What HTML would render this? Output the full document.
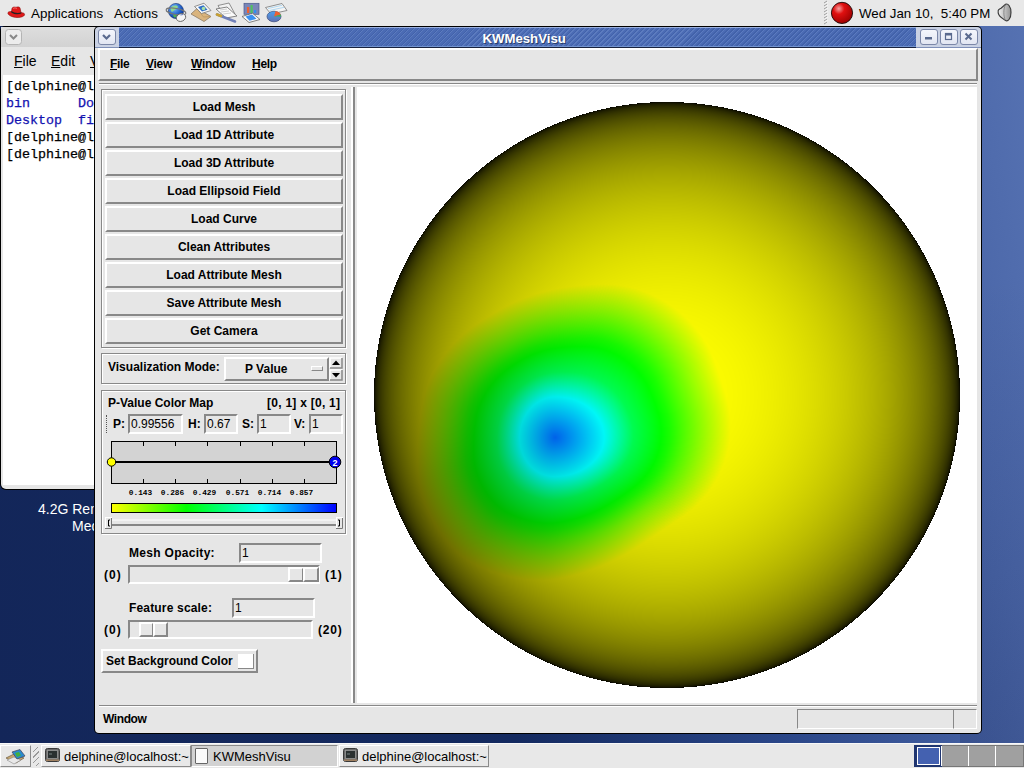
<!DOCTYPE html>
<html><head><meta charset="utf-8">
<style>
*{box-sizing:border-box}
html,body{margin:0;padding:0}
body{width:1024px;height:768px;overflow:hidden;position:relative;font-family:"Liberation Sans",sans-serif;
 background:linear-gradient(80deg,#132659 0%,#142a60 45%,#2a4688 68%,#4a66a8 90%,#5672b2 100%)}
.a{position:absolute}
.t{position:absolute;white-space:nowrap}
.tk{font-family:"Liberation Sans",sans-serif;font-weight:bold;font-size:12px;color:#000}
.rz{border-style:solid;border-width:2px;border-color:#fff #888 #888 #fff}
.sk{border-style:solid;border-width:2px;border-color:#888 #fff #fff #888}
.gr{border:1px solid #888;box-shadow:inset 1px 1px 0 #fff,1px 1px 0 #fff}
.btn{position:absolute;left:105px;width:238px;height:26px;background:#e6e6e6;text-align:center;line-height:22px}
.ent{position:absolute;background:#e6e6e6;font-family:"Liberation Sans",sans-serif;font-size:12px;color:#000;line-height:17px;padding-left:1px}
.mn{top:57px;letter-spacing:-0.3px}
.wb{position:absolute;top:29px;width:18px;height:16px;border:1px solid #7b87a8;border-radius:3px;background:linear-gradient(#f4f6fc,#e2e6f2)}
.tb{position:absolute;top:745px;height:22px;border:1px solid;border-color:#fff #8a8a8a #8a8a8a #fff;background:#e8e8e8}
</style></head><body>

<!-- top panel -->
<div class="a" style="left:0;top:0;width:1024px;height:26px;background:#e8e8e8"></div>
<div class="t" style="left:31px;top:5.5px;font-size:13.4px;color:#000">Applications</div>
<div class="t" style="left:114px;top:5.5px;font-size:13.4px;color:#000">Actions</div>
<div class="t" style="left:859px;top:5.5px;font-size:13.3px;color:#000">Wed Jan 10,&nbsp; 5:40 PM</div>

<svg class="a" style="left:0;top:0" width="300" height="26">
 <defs>
  <radialGradient id="glb" cx="0.35" cy="0.3" r="0.8"><stop offset="0" stop-color="#7fc0ff"/><stop offset="0.6" stop-color="#1f5fc8"/><stop offset="1" stop-color="#0a2a80"/></radialGradient>
  <radialGradient id="rb" cx="0.35" cy="0.3" r="0.75"><stop offset="0" stop-color="#f5a0a0"/><stop offset="0.35" stop-color="#e01010"/><stop offset="1" stop-color="#9a0000"/></radialGradient>
  <linearGradient id="pie" x1="0" y1="0" x2="0" y2="1"><stop offset="0" stop-color="#4aa0f0"/><stop offset="1" stop-color="#6070b0"/></linearGradient>
 </defs>
 <!-- red hat -->
 <path d="M8 12.5 C7 14.5 12 17.5 17 17.5 C22 17.5 25 16 24.5 14 C24 12.5 22 13 21 12.5 L20 8 C19.5 6.5 17.5 6.8 16 7.3 C14.5 6.8 12.5 7 12 8.5 L11.5 11.5 C10 11.5 8.6 11.6 8 12.5 Z" fill="#e01818" stroke="#8a0a0a" stroke-width="0.6"/>
 <path d="M11.4 11 C14 13 18.5 13.5 21.2 12.3 L21.4 13.6 C18.5 14.8 14 14.4 11.2 12.4 Z" fill="#222"/>
 <path d="M13 8.5 C14 7.6 16 7.8 17 8.5" stroke="#ff8080" stroke-width="0.8" fill="none"/>
 <!-- globe + mouse -->
 <circle cx="176" cy="11" r="7.6" fill="url(#glb)" stroke="#123070" stroke-width="0.6"/>
 <path d="M171 8 C173 5 177 5 178 7 C177 9 174 10 172 12 C171 11 170.5 9.5 171 8 Z" fill="#8fd88f"/>
 <path d="M173 15 C175 14 177 15 177 17 L174 17.5 Z" fill="#50b050"/>
 <ellipse cx="176" cy="11.5" rx="10" ry="3" fill="none" stroke="#777" stroke-width="1.1" transform="rotate(10 176 11.5)"/>
 <ellipse cx="181" cy="17.5" rx="4.8" ry="3.8" fill="#f4f4f4" stroke="#666" stroke-width="0.9" transform="rotate(-20 181 17.5)"/>
 <path d="M180.5 15 L183 14.5" stroke="#6680c0" stroke-width="1"/>
 <!-- envelope with photo -->
 <path d="M191 14 L197 8.5 L211 16.5 L204 21.5 Z" fill="#d9b47e" stroke="#8a7a66" stroke-width="0.8"/>
 <path d="M197 8.5 L203.5 17 L211 16.5" fill="none" stroke="#b8925a" stroke-width="0.7"/>
 <path d="M194.5 6.5 L204 3.2 L211 10.5 L201.5 13.5 Z" fill="#f6f6f6" stroke="#777" stroke-width="0.8"/>
 <path d="M198 7 L203.5 5.3 L207.5 9.8 L202 11.5 Z" fill="#3070c8"/>
 <circle cx="203.5" cy="8.5" r="1.8" fill="#a8e0a8"/>
 <!-- documents + pen -->
 <path d="M218 5.5 L229 3 L235 14 L224 16.5 Z" fill="#f2f2f2" stroke="#777" stroke-width="0.8"/>
 <path d="M216 9 L227 7 L237 16 L226 18 Z" fill="#fafafa" stroke="#666" stroke-width="0.8"/>
 <path d="M220 10 L227 9 M221 12 L229 11 M223 14 L231 13" stroke="#bbb" stroke-width="0.7"/>
 <path d="M217 14.5 L235 21.5" stroke="#7080b8" stroke-width="2.6" stroke-linecap="round"/>
 <path d="M217 14.5 L221 16" stroke="#c8a030" stroke-width="2.6" stroke-linecap="round"/>
 <!-- chart -->
 <rect x="244" y="3.3" width="15" height="11" fill="#7a86b8" stroke="#4a5a8a" stroke-width="0.7"/>
 <rect x="247" y="7" width="2.2" height="6" fill="#f06030"/>
 <rect x="250.5" y="5" width="2.2" height="8" fill="#50c060"/>
 <rect x="254" y="10" width="2.2" height="3" fill="#3090f0"/>
 <path d="M242 16.5 L252.5 13.2 L260 19.5 L249 22.5 Z" fill="#f8f8f8" stroke="#666" stroke-width="0.8"/>
 <path d="M245.5 16.5 L252 14.6 L256.5 18.8 L249.5 20.8 Z" fill="#3a90f0"/>
 <!-- pie chart -->
 <path d="M265.5 7.5 L282 3.5 L287 10.5 L271 14 Z" fill="#f4f4f4" stroke="#777" stroke-width="0.8"/>
 <path d="M268 8.5 L282 5.3 M269.5 10.5 L284 7.3" stroke="#9fd0f0" stroke-width="0.8"/>
 <ellipse cx="274" cy="16.5" rx="7" ry="5.3" fill="url(#pie)" stroke="#3a4a7a" stroke-width="0.7"/>
 <path d="M274 16.5 L275.5 11.3 C278 11.5 280 12.5 280.8 14.5 Z" fill="#f06030"/>
 <path d="M274 16.5 L280.8 14.5 L281 16.5 Z" fill="#40b050"/>
</svg>
<svg class="a" style="left:815px;top:0" width="209" height="26">
 <path d="M9 3 L12 1 M9 6 L12 4 M9 9 L12 7 M9 12 L12 10 M9 15 L12 13 M9 18 L12 16 M9 21 L12 19 M9 24 L12 22" stroke="#888" stroke-width="0.8"/>
 <path d="M10 4 L13 2 M10 7 L13 5 M10 10 L13 8 M10 13 L13 11 M10 16 L13 14 M10 19 L13 17 M10 22 L13 20" stroke="#fff" stroke-width="0.6"/>
 <circle cx="27" cy="12.9" r="10.6" fill="url(#rb)" stroke="#1a0a0a" stroke-width="0.9"/>
 <defs><linearGradient id="spk" x1="0" x2="1"><stop offset="0" stop-color="#f0f0f0"/><stop offset="0.6" stop-color="#b8b8b8"/><stop offset="1" stop-color="#909090"/></linearGradient></defs>
 <path d="M183.2 10.5 C182.8 13.5 183.8 15.5 186 17.2 L190.5 20.6 C193 21.8 196 18.5 196 12.5 C196 6.5 193 3.2 190.5 4.3 L186 8.2 C184.8 9 183.5 9.3 183.2 10.5 Z" fill="url(#spk)" stroke="#3a3a3a" stroke-width="1.1"/>
 <path d="M190.5 4.8 C188.3 8 188.3 17 190.5 20.2" stroke="#777" stroke-width="0.8" fill="none"/>
</svg>

<!-- terminal window -->
<div class="a" style="left:0;top:26px;width:110px;height:464px;background:#000;border-radius:5px 5px 5px 6px"></div>
<div class="a" style="left:1px;top:27px;width:108px;height:20px;background:linear-gradient(#dedede,#d2d2d2)"></div>
<div class="a" style="left:1px;top:47px;width:108px;height:442px;background:#e6e6e6;border-radius:0 0 0 5px"></div>
<div class="a" style="left:3px;top:75px;width:110px;height:410px;background:#fff"></div>
<svg class="a" style="left:4px;top:28px" width="20" height="18"><rect x="1.5" y="1.5" width="16" height="15" rx="3" fill="#ececec" stroke="#b4b4b4"/><path d="M6 7 L9.5 10.5 L13 7" stroke="#888" stroke-width="2" fill="none"/></svg>
<div class="t" style="left:14px;top:53px;font-size:14px"><u>F</u>ile</div>
<div class="t" style="left:51px;top:53px;font-size:14px"><u>E</u>dit</div>
<div class="t" style="left:90px;top:53px;font-size:14px"><u>V</u>iew</div>
<div class="t" style="left:6px;top:77.5px;font-family:'Liberation Mono',monospace;font-size:13.33px;line-height:17px;-webkit-text-stroke:0.25px currentColor">[delphine@localhost ~]$ ls<br><span style="color:#1212b0">bin&nbsp;&nbsp;&nbsp;&nbsp;&nbsp;&nbsp;Documents</span><br><span style="color:#1212b0">Desktop&nbsp;&nbsp;files</span><br>[delphine@localhost ~]$<br>[delphine@localhost ~]$</div>
<div class="t" style="left:38px;top:501px;font-size:14px;color:#fff">4.2G Removable</div>
<div class="t" style="left:72px;top:518px;font-size:14px;color:#fff">Media</div>

<div class="a" style="left:960px;top:26px;width:64px;height:717px;background:linear-gradient(rgba(20,30,70,0) 0%,rgba(20,30,70,0) 35%,rgba(20,30,70,0.18) 100%)"></div>
<!-- main window frame -->
<div class="a" style="left:94px;top:26px;width:888px;height:708px;background:#000;border-radius:5px"></div>
<div class="a" style="left:95px;top:27px;width:886px;height:20px;background:#c9d1e3;border-radius:4px 4px 0 0"></div>
<div class="a" style="left:119px;top:27px;width:797px;height:20px;background:repeating-linear-gradient(135deg,#4262aa 0 0.9px,#5c7bbf 0.9px 1.8px,#4b6bb4 1.8px 3.54px)"></div>
<div class="a" style="left:95px;top:47px;width:886px;height:1px;background:#7f90b8"></div>
<div class="a" style="left:119px;top:27px;width:797px;height:1px;background:#9ab0e0"></div>
<div class="a" style="left:119px;top:46px;width:797px;height:1px;background:#7394d0"></div>
<div class="a" style="left:119px;top:47px;width:797px;height:1px;background:#1a2440"></div>
<div class="a" style="left:95px;top:48px;width:886px;height:685px;background:#e6e6e6;border-radius:0 0 4px 4px"></div>
<div class="t" style="left:482.5px;top:31px;font-size:13.2px;font-weight:bold;color:#fff;text-shadow:1px 1px 0 #2a3d6a">KWMeshVisu</div>
<div class="wb" style="left:98px"></div>
<div class="wb" style="left:920px"></div>
<div class="wb" style="left:940px"></div>
<div class="wb" style="left:960px"></div>
<svg class="a" style="left:95px;top:27px" width="886" height="20">
 <path d="M8 8 L11.5 11.5 L15 8" stroke="#5a6a8e" stroke-width="2.2" fill="none"/>
 <rect x="830" y="10" width="7" height="2.5" fill="#5a6a8e"/>
 <rect x="850.5" y="6.5" width="6" height="6" stroke="#5a6a8e" stroke-width="1.2" fill="none"/><rect x="850" y="6" width="7" height="2.5" fill="#5a6a8e"/>
 <path d="M870.5 6.5 L876.5 12.5 M876.5 6.5 L870.5 12.5" stroke="#5a6a8e" stroke-width="2" fill="none"/>
</svg>

<!-- menubar -->
<div class="a rz" style="left:98px;top:48px;width:880px;height:33px"></div>
<div class="a" style="left:99px;top:83px;width:878px;height:1px;background:#888"></div>
<div class="a" style="left:99px;top:84px;width:878px;height:1px;background:#fff"></div>
<div class="t tk mn" style="left:110px"><u>F</u>ile</div>
<div class="t tk mn" style="left:146px"><u>V</u>iew</div>
<div class="t tk mn" style="left:191px"><u>W</u>indow</div>
<div class="t tk mn" style="left:252px"><u>H</u>elp</div>

<!-- left panel: button group -->
<div class="a gr" style="left:101px;top:89px;width:245px;height:259px"></div>
<div class="btn tk rz" style="top:94px">Load Mesh</div>
<div class="btn tk rz" style="top:122px">Load 1D Attribute</div>
<div class="btn tk rz" style="top:150px">Load 3D Attribute</div>
<div class="btn tk rz" style="top:178px">Load Ellipsoid Field</div>
<div class="btn tk rz" style="top:206px">Load Curve</div>
<div class="btn tk rz" style="top:234px">Clean Attributes</div>
<div class="btn tk rz" style="top:262px">Load Attribute Mesh</div>
<div class="btn tk rz" style="top:290px">Save Attribute Mesh</div>
<div class="btn tk rz" style="top:318px">Get Camera</div>

<!-- visualization mode -->
<div class="a gr" style="left:101px;top:353px;width:245px;height:31px"></div>
<div class="t tk" style="left:108px;top:360px">Visualization Mode:</div>
<div class="a rz" style="left:224px;top:357px;width:105px;height:24px;background:#e6e6e6"></div>
<div class="t tk" style="left:245px;top:362px">P Value</div>
<div class="a rz" style="left:311px;top:366px;width:12px;height:5px;border-width:1px"></div>
<svg class="a" style="left:329px;top:357px" width="14" height="24">
 <path d="M1 11 L1 1 L13 1" stroke="#fff" stroke-width="1.5" fill="none"/><path d="M13 1 L13 11 L1 11" stroke="#888" stroke-width="1.5" fill="none"/>
 <path d="M1 23 L1 13 L13 13" stroke="#fff" stroke-width="1.5" fill="none"/><path d="M13 13 L13 23 L1 23" stroke="#888" stroke-width="1.5" fill="none"/>
 <path d="M3 8 L7 3.5 L11 8 Z" fill="#000"/><path d="M3 16 L7 20.5 L11 16 Z" fill="#000"/>
</svg>

<!-- color map frame -->
<div class="a gr" style="left:101px;top:390px;width:245px;height:144px"></div>
<div class="t tk" style="left:108px;top:396px">P-Value Color Map</div>
<div class="t tk" style="left:267px;top:396px;letter-spacing:0.26px">[0, 1] x [0, 1]</div>
<div class="a" style="left:106px;top:415px;width:2px;height:18px;border-left:1px dotted #555"></div>
<div class="t tk" style="left:113px;top:417px">P:</div>
<div class="ent sk" style="left:128px;top:414px;width:55px;height:20px">0.99556</div>
<div class="t tk" style="left:188px;top:417px">H:</div>
<div class="ent sk" style="left:204px;top:414px;width:34px;height:20px">0.67</div>
<div class="t tk" style="left:242px;top:417px">S:</div>
<div class="ent sk" style="left:257px;top:414px;width:34px;height:20px">1</div>
<div class="t tk" style="left:294px;top:417px">V:</div>
<div class="ent sk" style="left:309px;top:414px;width:34px;height:20px">1</div>

<svg class="a" style="left:104px;top:438px" width="242" height="94">
 <rect x="7.5" y="3.5" width="225" height="42" fill="#d3d3d3" stroke="#000" stroke-width="1"/>
 <g stroke="#000" stroke-width="1">
  <path d="M39.5 4 V8 M71.5 4 V8 M103.5 4 V8 M136.5 4 V8 M168.5 4 V8 M200.5 4 V8"/>
  <path d="M39.5 41 V45 M71.5 41 V45 M103.5 41 V45 M136.5 41 V45 M168.5 41 V45 M200.5 41 V45"/>
 </g>
 <path d="M7.5 24 H231" stroke="#000" stroke-width="2"/>
 <circle cx="7.5" cy="24" r="4.2" fill="#ff0" stroke="#000" stroke-width="1"/>
 <circle cx="231" cy="24" r="5.8" fill="#0000ee" stroke="#000" stroke-width="1"/>
 <text x="231" y="27.5" font-family="Liberation Sans" font-weight="bold" font-size="9" fill="#fff" text-anchor="middle">2</text>
 <g font-family="Liberation Mono" font-size="7.8" font-weight="bold" fill="#000" text-anchor="middle">
  <text x="36.5" y="57">0.143</text><text x="68.5" y="57">0.286</text><text x="100.5" y="57">0.429</text>
  <text x="133.5" y="57">0.571</text><text x="165.5" y="57">0.714</text><text x="197.5" y="57">0.857</text>
 </g>
 <defs><linearGradient id="cm" x1="0" x2="1" y1="0" y2="0">
  <stop offset="0" stop-color="#ffff00"/><stop offset="0.333" stop-color="#00ff00"/><stop offset="0.667" stop-color="#00ffff"/><stop offset="1" stop-color="#0000ff"/>
 </linearGradient></defs>
 <rect x="7.5" y="65.5" width="225" height="9" fill="url(#cm)" stroke="#000" stroke-width="1"/>
 <path d="M7 82 H233" stroke="#fff" stroke-width="1"/>
 <path d="M7 87 H233" stroke="#666" stroke-width="1.5"/>
 <rect x="1.5" y="79.5" width="6" height="11" fill="#e6e6e6" stroke="#fff" stroke-width="1"/>
 <path d="M7.5 80 V90.5 H1" stroke="#777" stroke-width="1" fill="none"/>
 <path d="M4.5 82 V88 M4.5 82 H6 M4.5 88 H6" stroke="#000" stroke-width="1"/>
 <rect x="232.5" y="79.5" width="6" height="11" fill="#e6e6e6" stroke="#fff" stroke-width="1"/>
 <path d="M238.5 80 V90.5 H232" stroke="#777" stroke-width="1" fill="none"/>
 <path d="M235.5 82 V88 M234 82 H235.5 M234 88 H235.5" stroke="#000" stroke-width="1"/>
</svg>

<!-- mesh opacity -->
<div class="t tk" style="left:129px;top:546px;letter-spacing:0.3px">Mesh Opacity:</div>
<div class="ent sk" style="left:239px;top:543px;width:83px;height:20px">1</div>
<div class="t tk" style="left:104px;top:568px;letter-spacing:1.1px">(0)</div>
<div class="a sk" style="left:128px;top:565px;width:192px;height:19px"></div>
<div class="a rz" style="left:288px;top:567px;width:16px;height:15px"></div>
<div class="a rz" style="left:303px;top:567px;width:16px;height:15px"></div>
<div class="t tk" style="left:325px;top:568px;letter-spacing:1.1px">(1)</div>

<!-- feature scale -->
<div class="t tk" style="left:129px;top:601px;letter-spacing:0.17px">Feature scale:</div>
<div class="ent sk" style="left:232px;top:598px;width:83px;height:20px">1</div>
<div class="t tk" style="left:104px;top:623px;letter-spacing:1.1px">(0)</div>
<div class="a sk" style="left:128px;top:620px;width:185px;height:19px"></div>
<div class="a rz" style="left:139px;top:622px;width:15px;height:15px"></div>
<div class="a rz" style="left:153px;top:622px;width:15px;height:15px"></div>
<div class="t tk" style="left:318px;top:623px;letter-spacing:0.8px">(20)</div>

<!-- set background color -->
<div class="a rz" style="left:101px;top:649px;width:157px;height:24px;background:#e6e6e6"></div>
<div class="t tk" style="left:106px;top:654px">Set Background Color</div>
<div class="a" style="left:238px;top:654px;width:16px;height:15px;background:#fff;border-right:1px solid #888;border-bottom:1px solid #888"></div>

<!-- sash -->
<div class="a" style="left:351px;top:87px;width:4px;height:616px;border-style:solid;border-width:0 2px 0 2px;border-color:#fff #888 #fff #fff"></div>

<!-- render view -->
<div class="a" style="left:357px;top:87px;width:620px;height:616px;background:#fff"></div>
<svg class="a" style="left:357px;top:87px" width="620" height="616">
 <defs>
  <radialGradient id="sh" cx="310" cy="308" r="293" gradientUnits="userSpaceOnUse">
   <stop offset="0" stop-color="#ffff00"/><stop offset="0.5" stop-color="#ecec00"/><stop offset="0.75" stop-color="#b4b400"/><stop offset="0.9" stop-color="#707000"/><stop offset="0.97" stop-color="#383800"/><stop offset="1" stop-color="#000"/>
  </radialGradient>
  <radialGradient id="bl" cx="198" cy="350" r="150" gradientUnits="userSpaceOnUse">
   <stop offset="0" stop-color="#0060f0"/><stop offset="0.2" stop-color="#00e8e0"/><stop offset="0.45" stop-color="#00e020" stop-opacity="1"/><stop offset="0.8" stop-color="#a0e000" stop-opacity="0.6"/><stop offset="1" stop-color="#e0e000" stop-opacity="0"/>
  </radialGradient>
 </defs>
 <circle cx="310" cy="308" r="293" fill="url(#sh)"/>
 <ellipse cx="208" cy="350" rx="150" ry="140" fill="url(#bl)"/>
</svg>
<canvas id="cv" class="a" style="left:357px;top:87px" width="620" height="616"></canvas>

<!-- status bar -->
<div class="a" style="left:99px;top:705px;width:878px;height:1px;background:#888"></div>
<div class="a" style="left:99px;top:706px;width:878px;height:1px;background:#fff"></div>
<div class="t tk" style="left:103px;top:712px;letter-spacing:-0.4px">Window</div>
<div class="a" style="left:797px;top:709px;width:157px;height:20px;border:1px solid;border-color:#888 #fff #fff #888"></div>
<div class="a" style="left:953px;top:709px;width:24px;height:20px;border:1px solid;border-color:#888 #fff #fff #888"></div>

<!-- bottom taskbar -->
<div class="a" style="left:0;top:743px;width:1024px;height:25px;background:#e8e8e8;border-top:1px solid #f8f8f8"></div>
<div class="tb" style="left:0;width:31px"></div>
<svg class="a" style="left:4px;top:748px" width="24" height="18">
 <path d="M2 10 L10 6 L20 10 L12 15 Z" fill="#c8a870" stroke="#6a5a40" stroke-width="0.7"/>
 <path d="M3 12 L10 9 L17 12 L10 16 Z" fill="#e8e8e8" stroke="#888" stroke-width="0.6"/>
 <path d="M8 4 L16 1.5 L21 8 L13 11 Z" fill="#2a8ad0" stroke="#445" stroke-width="0.7"/>
 <path d="M11 5 L15 4 L17 7.5 L13 9 Z" fill="#40b040"/>
</svg>
<div class="a" style="left:33px;top:747px;width:6px;height:19px;background:repeating-linear-gradient(135deg,transparent 0 3px,#999 3px 4px)"></div>
<div class="tb" style="left:41px;width:150px"></div>
<div class="tb" style="left:191px;width:147px;background:#d2d2d2;border-color:#8a8a8a #fff #fff #8a8a8a"></div>
<div class="tb" style="left:339px;width:150px"></div>
<svg class="a" style="left:45px;top:748px" width="16" height="15"><rect x="0.5" y="0.5" width="14" height="13" rx="2" fill="#6a6a6a" stroke="#3a3a3a"/><rect x="2.5" y="2.5" width="10" height="8" fill="#2a3030" stroke="#9a9a9a" stroke-width="0.8"/><path d="M4 6 H7" stroke="#8a9a9a" stroke-width="0.8"/><rect x="1" y="11.5" width="13" height="1.5" fill="#a08060"/></svg>
<svg class="a" style="left:343px;top:748px" width="16" height="15"><rect x="0.5" y="0.5" width="14" height="13" rx="2" fill="#6a6a6a" stroke="#3a3a3a"/><rect x="2.5" y="2.5" width="10" height="8" fill="#2a3030" stroke="#9a9a9a" stroke-width="0.8"/><path d="M4 6 H7" stroke="#8a9a9a" stroke-width="0.8"/><rect x="1" y="11.5" width="13" height="1.5" fill="#a08060"/></svg>
<div class="a" style="left:195px;top:748px;width:13px;height:16px;background:#fafafa;border:1px solid #666;border-radius:1px"></div>
<div class="t" style="left:64px;top:749px;font-size:13px">delphine@localhost:~</div>
<div class="t" style="left:213px;top:749px;font-size:13px">KWMeshVisu</div>
<div class="t" style="left:362px;top:749px;font-size:13px">delphine@localhost:~</div>
<div class="a" style="left:914px;top:745px;width:110px;height:22px;background:#a0a0a0;border:1px solid #777"></div>
<div class="a" style="left:914px;top:745px;width:28px;height:22px;background:#1f3570"></div>
<div class="a" style="left:917px;top:747px;width:23px;height:18px;background:#4461b0;border:1px solid #fff"></div>
<div class="a" style="left:941px;top:746px;width:1px;height:20px;background:#fff"></div>
<div class="a" style="left:968px;top:746px;width:1px;height:20px;background:#fff"></div>
<div class="a" style="left:995px;top:746px;width:1px;height:20px;background:#fff"></div>

<script>
(function(){
var c=document.getElementById('cv');var ctx=c.getContext('2d');
var W=c.width,H=c.height,ox=357,oy=87;
var img=ctx.createImageData(W,H);var d=img.data;
var cx=667,cy=395,R=293;
function hsv(h,s,v){var i=Math.floor(h*6),f=h*6-i,p=v*(1-s),q=v*(1-f*s),t=v*(1-(1-f)*s);
 switch(((i%6)+6)%6){case 0:return[v,t,p];case 1:return[q,v,p];case 2:return[p,v,t];case 3:return[p,q,v];case 4:return[t,p,v];default:return[v,p,q];}}
var PL=[[-4,-140],[122,-137],[168,5],[168,30],[34,124],[-50,134],[-122,85],[-128,-5],[-109,-80]];
var RP=new Array(360);
for(var a=0;a<360;a++){var th=a*Math.PI/180-Math.PI;var ux=Math.cos(th),uy=Math.sin(th);var best=1e9;
 for(var e=0;e<PL.length;e++){var p1=PL[e],p2=PL[(e+1)%PL.length];var ex=p2[0]-p1[0],ey=p2[1]-p1[1];
  var den=ux*ey-uy*ex;if(Math.abs(den)<1e-9)continue;
  var tt=(p1[0]*ey-p1[1]*ex)/den;var uu=(p1[0]*uy-p1[1]*ux)/den;
  if(tt>0&&uu>=-1e-6&&uu<=1+1e-6&&tt<best)best=tt;}
 RP[a]=best;}
var RS=new Array(360);for(var a=0;a<360;a++){var sm=0;for(var j=-22;j<=22;j++){sm+=RP[(a+j+360)%360];}RS[a]=sm/45;}
var st=[[0,0.86],[0.29,0.667],[0.47,0.44],[0.7,0.3],[0.9,0.14],[1.08,0.0]];
function tf(dd){if(dd>=1.08)return 0;for(var i=1;i<st.length;i++){if(dd<st[i][0]){var a=st[i-1],b=st[i];return a[1]+(b[1]-a[1])*(dd-a[0])/(b[0]-a[0]);}}return 0;}
for(var y=0;y<H;y++){for(var x=0;x<W;x++){
 var k=(y*W+x)*4;var X=x+ox+0.5,Y=y+oy+0.5;var nx=(X-cx)/R,ny=(Y-cy)/R;var r2=nx*nx+ny*ny;
 if(r2>=1){d[k]=255;d[k+1]=255;d[k+2]=255;d[k+3]=255;continue;}
 var nz=Math.sqrt(1-r2);
 var dx=X-555,dy=Y-437.5;
 var rx=dx>0?170:121, ry=dy>0?135:140;
 var ax=dx/rx,ay=dy/ry;
 var de=Math.sqrt(ax*ax+ay*ay);
 var r=Math.sqrt(dx*dx+dy*dy);
 var ai=Math.round((Math.atan2(dy,dx)+Math.PI)*180/Math.PI)%360;
 var Rp=RS[ai];var dp=r/Rp;
 var w=0.85*Math.max(0,Math.min(1,(de-0.25)/0.5));
 var dd=de*(1-w)+dp*w;
 var t=tf(dd);
 var col=hsv((60+180*t)/360,1,1);
 d[k]=Math.round(col[0]*255*nz);d[k+1]=Math.round(col[1]*255*nz);d[k+2]=Math.round(col[2]*255*nz);d[k+3]=255;
}}
ctx.putImageData(img,0,0);
})();
</script>
</body></html>
